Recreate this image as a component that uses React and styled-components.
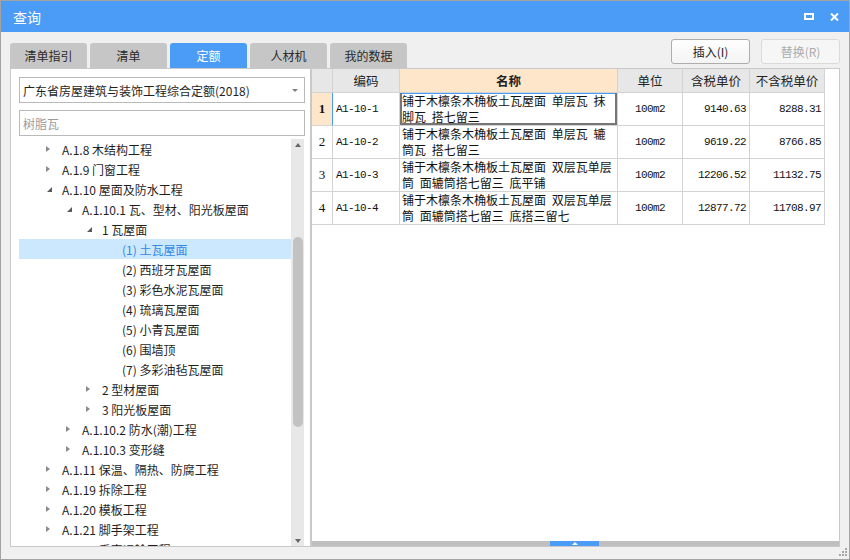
import React from 'react';
import styled, { createGlobalStyle } from 'styled-components';

const GlobalStyle = createGlobalStyle`
  html, body {
    margin: 0;
    padding: 0;
    background: #f0f0f0;
  }
  body {
    font-family: "Noto Sans CJK SC", "Noto Sans", sans-serif;
  }
  * {
    box-sizing: border-box;
  }
`;

const BLUE = '#4a9cf7';
const GRID = '#d3d3d3';

const Window = styled.div`
  position: relative;
  width: 850px;
  height: 560px;
  border: 1px solid #a3a3a3;
  background: #f0f0f0;
  display: flex;
  flex-direction: column;
  font-size: 12px;
  color: #1f1f1f;
`;

const TitleBar = styled.div`
  flex: none;
  height: 31px;
  background: ${BLUE};
  display: flex;
  align-items: center;
  padding: 0 10px 0 12px;
  color: #fff;
  font-size: 14px;

  & > span {
    flex: 1;
  }
`;

const TitleIcons = styled.div`
  display: flex;
  align-items: center;
  gap: 16px;

  svg {
    display: block;
  }
`;

const Body = styled.div`
  flex: 1;
  display: flex;
  flex-direction: column;
  padding: 6px 9px 12px;
`;

const TopRow = styled.div`
  flex: none;
  height: 30px;
  display: flex;
  justify-content: space-between;
  align-items: flex-start;
`;

const Tabs = styled.div`
  display: flex;
  gap: 3px;
  margin-top: 5px;
`;

const Tab = styled.div`
  width: 77px;
  height: 25px;
  border-radius: 3px 3px 0 0;
  background: ${(p) => (p.$active ? BLUE : '#c6c6c6')};
  color: ${(p) => (p.$active ? '#fff' : '#2a2a2a')};
  display: flex;
  align-items: center;
  justify-content: center;
`;

const Actions = styled.div`
  display: flex;
  gap: 11px;
  margin-top: 1px;
`;

const Button = styled.button`
  width: 79px;
  height: 25px;
  padding: 0;
  border: 1px solid ${(p) => (p.disabled ? '#dadada' : '#adadad')};
  border-radius: 3px;
  background: ${(p) => (p.disabled ? '#f6f6f6' : 'linear-gradient(#fefefe, #f4f4f4)')};
  color: ${(p) => (p.disabled ? '#ababab' : '#1f1f1f')};
  font-family: inherit;
  font-size: 12px;
`;

const Content = styled.div`
  flex: none;
  height: 479px;
  display: flex;
`;

const LeftPanel = styled.div`
  width: 301px;
  flex: none;
  background: #fff;
  border: 1px solid #c9c9c9;
  display: flex;
  flex-direction: column;
  padding: 7px 5px 0 8px;
`;

const Select = styled.div`
  height: 26px;
  margin-top: 1px;
  border: 1px solid #b9b9b9;
  display: flex;
  align-items: center;
  padding: 0 6px 0 3px;

  span {
    flex: 1;
  }

  i {
    width: 0;
    height: 0;
    border-left: 3px solid transparent;
    border-right: 3px solid transparent;
    border-top: 3px solid #808080;
  }
`;

const Search = styled.input`
  height: 26px;
  margin-top: 7px;
  border: 1px solid #b9b9b9;
  padding: 0 3px;
  font-family: inherit;
  font-size: 12px;
  outline: none;

  &::placeholder {
    color: #9c9c9c;
  }
`;

const Tree = styled.div`
  flex: 1;
  min-height: 0;
  margin: 3px 1px 0 0;
  display: flex;
  overflow: hidden;
`;

const TreeList = styled.div`
  flex: 1;
`;

const TreeRow = styled.div`
  height: 20px;
  display: flex;
  align-items: center;
  white-space: nowrap;
  padding-left: ${(p) => 27 + p.$level * 20}px;
  background: ${(p) => (p.$selected ? '#cce8ff' : 'transparent')};
  color: ${(p) => (p.$selected ? '#3386e6' : '#1f1f1f')};
`;

const Toggle = styled.span`
  width: 16px;
  flex: none;
  display: flex;
  align-items: center;
`;

const Collapsed = styled.i`
  width: 0;
  height: 0;
  border-top: 3.5px solid transparent;
  border-bottom: 3.5px solid transparent;
  border-left: 4px solid #8a8a8a;
`;

const Expanded = styled.i`
  width: 0;
  height: 0;
  margin: 1px 0 0 1px;
  border-top: 5px solid transparent;
  border-right: 5px solid #5a5a5a;
`;

const ScrollTrack = styled.div`
  width: 13px;
  flex: none;
  background: #e8e8e8;
  display: flex;
  flex-direction: column;
  align-items: center;
`;

const ArrowUp = styled.i`
  margin-top: 4px;
  width: 0;
  height: 0;
  border-left: 3.5px solid transparent;
  border-right: 3.5px solid transparent;
  border-bottom: 4px solid #666;
`;

const ArrowDown = styled.i`
  margin: auto 0 3px;
  width: 0;
  height: 0;
  border-left: 3.5px solid transparent;
  border-right: 3.5px solid transparent;
  border-top: 4px solid #666;
`;

const Thumb = styled.div`
  margin-top: ${(p) => p.$offset}px;
  width: 10px;
  height: ${(p) => p.$size}px;
  border-radius: 5px;
  background: #c2c2c2;
`;

const RightPanel = styled.div`
  flex: 1;
  background: #fff;
  border: 1px solid #c9c9c9;
  display: flex;
  flex-direction: column;
`;

const Grid = styled.div`
  display: grid;
  grid-template-columns: 21px 67px 218px 65px 67px 75px;
  align-content: start;
`;

const HeadCell = styled.div`
  height: 24px;
  background: ${(p) => (p.$accent ? '#fee6ca' : '#e7e7e7')};
  border-right: 1px solid ${GRID};
  border-bottom: 1px solid ${GRID};
  display: flex;
  align-items: center;
  justify-content: center;
  font-size: 12.5px;
  font-weight: ${(p) => (p.$bold ? 700 : 400)};
  color: #222;
`;

const Cell = styled.div`
  height: 33px;
  border-right: 1px solid ${GRID};
  border-bottom: 1px solid ${GRID};
  display: flex;
  align-items: center;
  justify-content: ${(p) => p.$justify || 'flex-start'};
  padding: 0 3px 0 3px;
  font-family: "Liberation Mono", "DejaVu Sans Mono", monospace;
  font-size: 11px;
  letter-spacing: -0.6px;
  color: #111;
  white-space: nowrap;
`;

const NumCell = styled(Cell)`
  justify-content: center;
  padding: 0;
  background: ${(p) => (p.$active ? '#fee6ca' : '#fff')};
  border-right-color: ${(p) => (p.$active ? BLUE : GRID)};
  font-family: "Liberation Serif", serif;
  font-size: 13px;
  letter-spacing: 0;
  font-weight: ${(p) => (p.$active ? 700 : 400)};
`;

const NameCell = styled.div`
  height: 33px;
  border-right: 1px solid ${GRID};
  border-bottom: 1px solid ${GRID};
  padding: 0 2px;
  line-height: 16px;
  font-size: 12px;
  word-spacing: 3px;
  white-space: nowrap;
  overflow: hidden;
  color: #111;
  box-shadow: ${(p) =>
    p.$active
      ? `inset 2px 0 #767676, inset -2px 0 #767676, inset 0 -2px #767676, inset 0 1px ${BLUE}`
      : 'none'};
`;

const SplitBar = styled.div`
  margin-top: auto;
  height: 5px;
  flex: none;
  background: #bfbfbf;
  display: flex;
`;

const SplitHandle = styled.div`
  margin-left: 238px;
  width: 49px;
  background: ${BLUE};
  display: flex;
  align-items: center;
  justify-content: center;

  i {
    width: 0;
    height: 0;
    border-left: 3px solid transparent;
    border-right: 3px solid transparent;
    border-bottom: 3px solid #fff;
  }
`;

const Grip = styled.svg`
  position: absolute;
  right: 1px;
  bottom: 3px;
`;

const tabs = ['清单指引', '清单', '定额', '人材机', '我的数据'];

const treeItems = [
  { level: 0, state: 'closed', label: 'A.1.8 木结构工程' },
  { level: 0, state: 'closed', label: 'A.1.9 门窗工程' },
  { level: 0, state: 'open', label: 'A.1.10 屋面及防水工程' },
  { level: 1, state: 'open', label: 'A.1.10.1 瓦、型材、阳光板屋面' },
  { level: 2, state: 'open', label: '1 瓦屋面' },
  { level: 3, label: '(1) 土瓦屋面', selected: true },
  { level: 3, label: '(2) 西班牙瓦屋面' },
  { level: 3, label: '(3) 彩色水泥瓦屋面' },
  { level: 3, label: '(4) 琉璃瓦屋面' },
  { level: 3, label: '(5) 小青瓦屋面' },
  { level: 3, label: '(6) 围墙顶' },
  { level: 3, label: '(7) 多彩油毡瓦屋面' },
  { level: 2, state: 'closed', label: '2 型材屋面' },
  { level: 2, state: 'closed', label: '3 阳光板屋面' },
  { level: 1, state: 'closed', label: 'A.1.10.2 防水(潮)工程' },
  { level: 1, state: 'closed', label: 'A.1.10.3 变形缝' },
  { level: 0, state: 'closed', label: 'A.1.11 保温、隔热、防腐工程' },
  { level: 0, state: 'closed', label: 'A.1.19 拆除工程' },
  { level: 0, state: 'closed', label: 'A.1.20 模板工程' },
  { level: 0, state: 'closed', label: 'A.1.21 脚手架工程' },
  { level: 0, state: 'closed', label: 'A.1.22 垂直运输工程' },
];

const rows = [
  {
    no: 1,
    code: 'A1-10-1',
    name: ['铺于木檩条木桷板土瓦屋面 单层瓦 抹', '脚瓦 搭七留三'],
    unit: '100m2',
    price: '9140.63',
    net: '8288.31',
  },
  {
    no: 2,
    code: 'A1-10-2',
    name: ['铺于木檩条木桷板土瓦屋面 单层瓦 辘', '筒瓦 搭七留三'],
    unit: '100m2',
    price: '9619.22',
    net: '8766.85',
  },
  {
    no: 3,
    code: 'A1-10-3',
    name: ['铺于木檩条木桷板土瓦屋面 双层瓦单层', '筒 面辘筒搭七留三 底平铺'],
    unit: '100m2',
    price: '12206.52',
    net: '11132.75',
  },
  {
    no: 4,
    code: 'A1-10-4',
    name: ['铺于木檩条木桷板土瓦屋面 双层瓦单层', '筒 面辘筒搭七留三 底搭三留七'],
    unit: '100m2',
    price: '12877.72',
    net: '11708.97',
  },
];

const App = () => {
  return (
    <>
      <GlobalStyle />
      <Window>
        <TitleBar>
          <span>查询</span>
          <TitleIcons>
            <svg width="10" height="7" viewBox="0 0 10 7">
              <rect x="1" y="1" width="8" height="5" fill="none" stroke="#fff" strokeWidth="2" />
            </svg>
            <svg width="9" height="8" viewBox="0 0 9 8">
              <path d="M1 0.5 L8 7.5 M8 0.5 L1 7.5" stroke="#fff" strokeWidth="2" />
            </svg>
          </TitleIcons>
        </TitleBar>
        <Body>
          <TopRow>
            <Tabs>
              {tabs.map((t) => (
                <Tab key={t} $active={t === '定额'}>
                  {t}
                </Tab>
              ))}
            </Tabs>
            <Actions>
              <Button>插入(I)</Button>
              <Button disabled>替换(R)</Button>
            </Actions>
          </TopRow>
          <Content>
            <LeftPanel>
              <Select>
                <span>广东省房屋建筑与装饰工程综合定额(2018)</span>
                <i />
              </Select>
              <Search placeholder="树脂瓦" />
              <Tree>
                <TreeList>
                  {treeItems.map((item) => (
                    <TreeRow key={item.label} $level={item.level} $selected={item.selected}>
                      <Toggle>
                        {item.state === 'closed' && <Collapsed />}
                        {item.state === 'open' && <Expanded />}
                      </Toggle>
                      {item.label}
                    </TreeRow>
                  ))}
                </TreeList>
                <ScrollTrack>
                  <ArrowUp />
                  <Thumb $offset={90} $size={190} />
                  <ArrowDown />
                </ScrollTrack>
              </Tree>
            </LeftPanel>
            <RightPanel>
              <Grid>
                <HeadCell />
                <HeadCell>编码</HeadCell>
                <HeadCell $accent $bold>
                  名称
                </HeadCell>
                <HeadCell>单位</HeadCell>
                <HeadCell>含税单价</HeadCell>
                <HeadCell>不含税单价</HeadCell>
                {rows.map((r) => (
                  <React.Fragment key={r.code}>
                    <NumCell $active={r.no === 1}>{r.no}</NumCell>
                    <Cell>{r.code}</Cell>
                    <NameCell $active={r.no === 1}>
                      {r.name[0]}
                      <br />
                      {r.name[1]}
                    </NameCell>
                    <Cell $justify="center">{r.unit}</Cell>
                    <Cell $justify="flex-end">{r.price}</Cell>
                    <Cell $justify="flex-end">{r.net}</Cell>
                  </React.Fragment>
                ))}
              </Grid>
              <SplitBar>
                <SplitHandle>
                  <i />
                </SplitHandle>
              </SplitBar>
            </RightPanel>
          </Content>
        </Body>
        <Grip width="9" height="8" viewBox="0 0 9 8">
          <g fill="#a8a8a8">
            <rect x="6" y="0" width="2" height="2" />
            <rect x="3" y="3" width="2" height="2" />
            <rect x="6" y="3" width="2" height="2" />
            <rect x="0" y="6" width="2" height="2" />
            <rect x="3" y="6" width="2" height="2" />
            <rect x="6" y="6" width="2" height="2" />
          </g>
        </Grip>
      </Window>
    </>
  );
};

export default App;
